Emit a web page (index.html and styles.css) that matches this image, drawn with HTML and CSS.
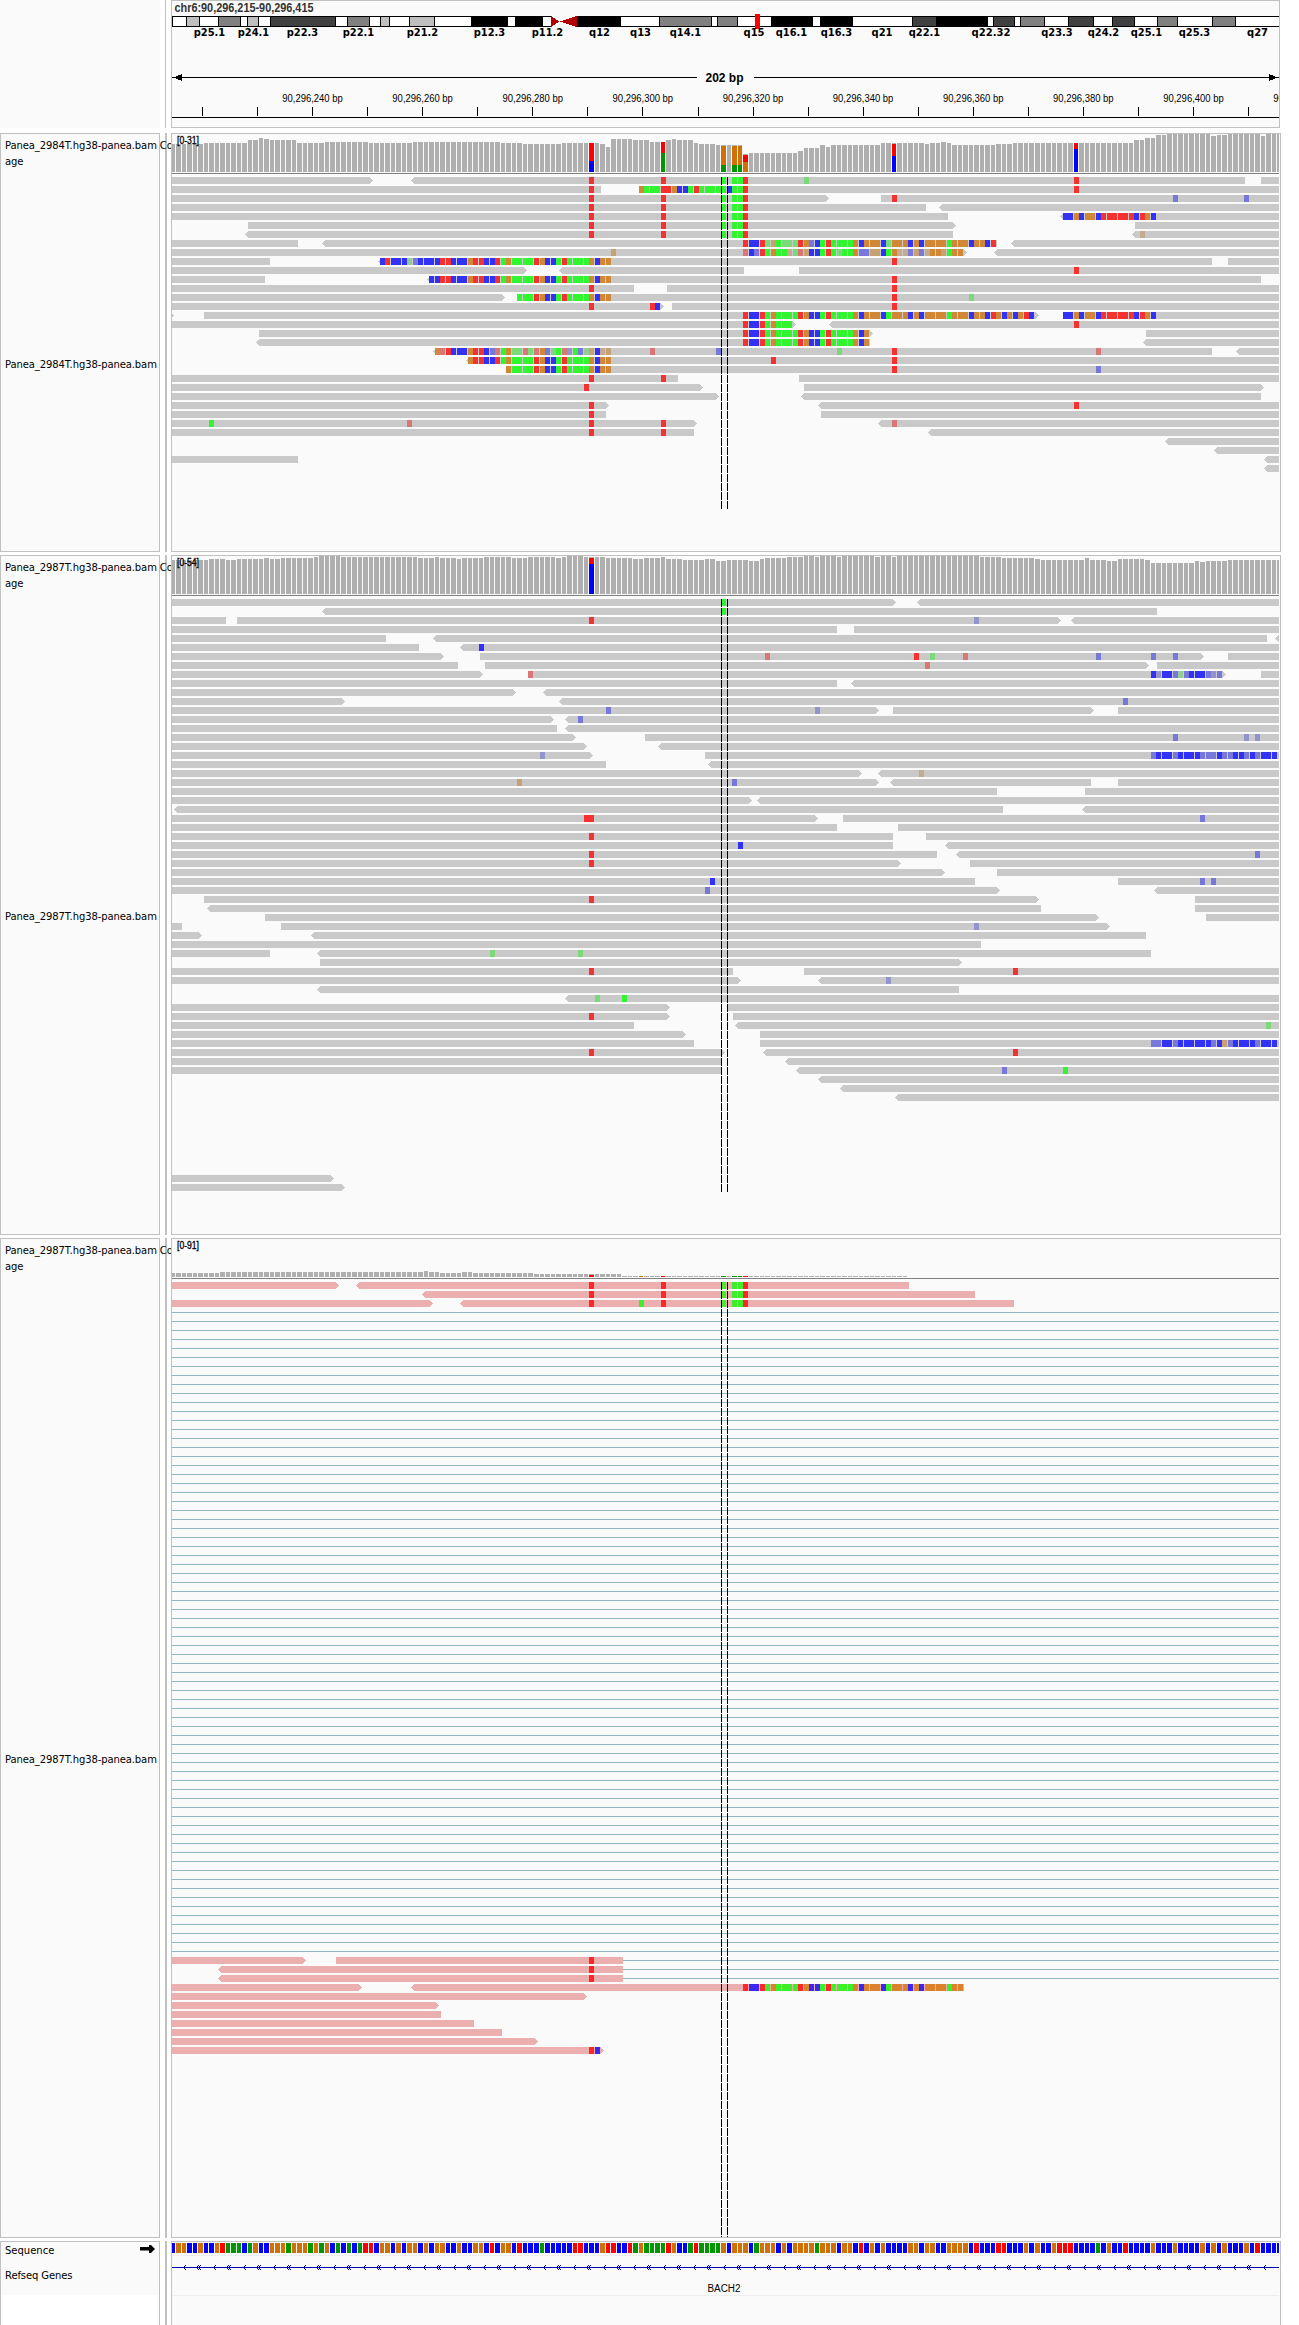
FILE: index.html
```html
<!DOCTYPE html>
<html lang="en">
<head>
<meta charset="utf-8">
<title>chr6:90,296,215-90,296,415</title>
<link rel="stylesheet" href="styles.css">
</head>
<body>
<main class="browser">
  <section class="row row-header">
    <div class="names names-blank"></div>
    <div class="divider divider-thin"></div>
    <div class="plot"><svg id="header" class="layer" width="1107" height="126" viewBox="172 1 1107 126"></svg></div>
  </section>

  <section class="row row-a">
    <div class="names">
      <div class="name-cov"><span>Panea_2984T.hg38-panea.bam Co</span><span>age</span></div>
      <div class="name-aln">Panea_2984T.hg38-panea.bam</div>
    </div>
    <div class="divider"></div>
    <div class="plot" id="a"></div>
  </section>

  <section class="row row-b">
    <div class="names">
      <div class="name-cov"><span>Panea_2987T.hg38-panea.bam Co</span><span>age</span></div>
      <div class="name-aln">Panea_2987T.hg38-panea.bam</div>
    </div>
    <div class="divider"></div>
    <div class="plot" id="b"></div>
  </section>

  <section class="row row-c">
    <div class="names">
      <div class="name-cov"><span>Panea_2987T.hg38-panea.bam Co</span><span>age</span></div>
      <div class="name-aln">Panea_2987T.hg38-panea.bam</div>
    </div>
    <div class="divider"></div>
    <div class="plot" id="c"></div>
  </section>

  <section class="row row-features">
    <div class="names names-open">
      <div class="feature-name">
        <span>Sequence</span>
        <svg class="strand" width="16" height="8" viewBox="0 0 16 8"><path d="M0 2H9V0H11L15 4L11 8H9V5.500H0Z"/></svg>
      </div>
      <div class="feature-name feature-genes">Refseq Genes</div>
    </div>
    <div class="divider"></div>
    <div class="plot plot-open"><svg id="features" class="layer" width="1108" height="83" viewBox="172 2242 1108 83"></svg></div>
  </section>
</main>
<script src="tracks.js"></script>
</body>
</html>
```
FILE: styles.css
```css
html, body { margin: 0; background: #fff; }
body { width: 1299px; height: 2325px; overflow: hidden; font-family: "DejaVu Sans", sans-serif; font-size: 10px; color: #000; }
.browser { display: flex; flex-direction: column; gap: 3px; }
.row { display: grid; grid-template-columns: 165px 6px 1110px; }
.row-header { height: 128px; margin-bottom: 2px; grid-template-columns: 165px 6px 1109px; }
.row-a { height: 419px; }
.row-b { height: 680px; }
.row-c { height: 1000px; }
.row-features { height: 84px; }

.names { box-sizing: border-box; width: 160px; border: 1px solid #c0c0c0; background: #fafafa; display: flex; flex-direction: column; letter-spacing: -0.1px; white-space: nowrap; position: relative; z-index: 1; }
.names-blank { border: 0; }
.names-open { border-bottom: 0; background: linear-gradient(#fafafa 53px, #fff 53px); }
.name-cov { height: 43px; padding-left: 4px; box-sizing: border-box; padding-top: 4px; }
.name-cov span { display: block; line-height: 16px; }
.name-aln { flex: 1; display: flex; align-items: center; padding-left: 4px; }
.feature-name { display: flex; align-items: center; justify-content: space-between; height: 16px; padding: 0 3px 0 4px; letter-spacing: 0; }
.feature-genes { height: 34px; letter-spacing: -0.1px; }
.strand { margin-bottom: 3px; }

.divider { width: 2px; background: #c0c0c0; }
.divider-thin { width: 1px; }
.plot { box-sizing: border-box; border: 1px solid #c0c0c0; background: #fafafa; overflow: hidden; position: relative; z-index: 2; }
.plot-open { border-bottom: 0; }
.layer { display: block; shape-rendering: crispEdges; }

.ruler-text { font-family: "Liberation Sans", sans-serif; font-size: 10px; }
.locus { font-family: "Liberation Sans", sans-serif; font-size: 12px; font-weight: bold; fill: #333; }
.span-text { font-family: "Liberation Sans", sans-serif; font-size: 12px; font-weight: bold; }
.band-text { font-family: "DejaVu Sans", sans-serif; font-size: 10px; font-weight: bold; }
.range { font-family: "Liberation Sans", sans-serif; font-size: 10px; stroke: #000; stroke-width: 0.3px; }
```
FILE: tracks.js
```js
const LEFT = 172, RIGHT = 1279;
const X = i => Math.floor(171.14 + 5.5055 * i);
const readX = i => Math.ceil(170.85 + 5.505 * i);

const rect = (x, y, w, h, fill) => {
  const x1 = Math.max(x, LEFT), x2 = Math.min(x + w, RIGHT);
  return x2 > x1 ? `<rect x="${x1}" y="${y}" width="${x2 - x1}" height="${h}" fill="${fill}"/>` : '';
};
const label = (cls, x, y, len, s, anchor = 'middle') =>
  `<text class="${cls}" x="${x}" y="${y}" text-anchor="${anchor}" textLength="${len}" lengthAdjust="spacingAndGlyphs">${s}</text>`;

const BASE = { A: '#009600', C: '#0000ff', G: '#d17105', T: '#ff0000' };
/* Lower case: low base quality; b, d and h are the faintest A, C and G. */
const GREY = {
  read: '#c9c9c9', A: '#32f532', C: '#3232f5', G: '#d08836', T: '#f53232',
  a: '#78da78', c: '#7878da', g: '#c8a172', t: '#d97777', b: '#93cd93', d: '#9393cd', h: '#c4ab90'
};
const PINK = { read: '#ebafaf', A: '#3cef28', C: '#3c28ef', G: '#dc822d', T: '#ff2828' };

/* Coverage: "count*height" runs, plus stacked allele columns (bottom first). */
function coverage(runs, alleles) {
  let out = '', i = 0;
  for (const run of runs.split(' ')) {
    const [n, h] = run.split('*').map(Number);
    for (let k = 0; k < n; k++, i++) {
      const w = X(i + 1) - X(i) - 1;
      out += rect(X(i), 38 - h, w, h, '#afafaf');
      let base = 38;
      for (const [, letter, size] of (alleles[i] || '').matchAll(/([ACGT])(\d+)/g)) {
        base -= +size;
        out += rect(X(i), base, w, +size, BASE[letter]);
      }
    }
  }
  return out + rect(LEFT, 39, 1107, 1, '#808080');
}

/* Reads: "<start-end>" segments, then "|" and mismatches such as 104TCCT. */
function reads(rows, colors) {
  let out = '';
  for (const [k, row] of Object.entries(rows)) {
    const y = k * 9, [segments, marks = ''] = row.split('|');
    for (const [, l, s, e, r] of segments.matchAll(/(<?)(\d+)-(\d+)(>?)/g)) {
      const x1 = readX(+s), x2 = +e >= 202 ? RIGHT : readX(+e);
      out += rect(x1, y, x2 - x1, 7, colors.read);
      if (l) out += `<path d="M${x1} ${y}L${x1 - 3} ${y + 3.5}L${x1} ${y + 7}Z" fill="${colors.read}"/>`;
      if (r) out += `<path d="M${x2} ${y}L${x2 + 3} ${y + 3.5}L${x2} ${y + 7}Z" fill="${colors.read}"/>`;
    }
    for (const [, at, seq] of marks.matchAll(/(\d+)([A-Za-z]+)/g))
      [...seq].forEach((b, n) => { out += rect(X(+at + n), y, 5, 7, colors[b]); });
  }
  return out;
}

const guides = end => [721, 727].map(x =>
  `<path d="M${x + .5} 0V${end}" stroke="#000" stroke-dasharray="8 1"/>`).join('');

function panel(id, height, range, cov, body) {
  document.getElementById(id).innerHTML =
    `<svg class="layer" width="1108" height="43" viewBox="172 0 1108 43">${cov}${label('range', 177, 9.5, 22, range, 'start')}</svg>` +
    `<svg class="layer" width="1108" height="${height}" viewBox="172 0 1108 ${height}">${body}</svg>`;
}

const rowsA = [
  '0-36> <44-195 198-202|76T 89T 100A 102AAT 115a 164T',
  '0-78 85-202|76T 85GAAATTGCCATAAAAACAAT 164T',
  '0-119> 129-202|76T 89T 100A 102AAT 131T 182c 195c',
  '0-137 <140-202|76T 89T 100A 102AAT',
  '0-141 <162-202|76T 89T 100A 102AAT 162CCGCGGCTTTTTTCTGC',
  '14-142> 175-202|76T 89T 100A 102AAT',
  '<14-142 <175-202|76T 89T 100A 102AAT 176h',
  '0-23 <28-150 <153-202|104TCCTagAaaaTGcCATAAAAGCGGGCaGGGCGCGGGGAGGGCGGCT',
  '0-144> <150-202|80g 104tCcTAGAAhatgCCATAaAAGccggCAGhhcgchGGgAGG',
  '0-18 <38-189 192-202|38CTCCCbcCCCCTTCCCGTTCCTAGAAAATGCCATAAAAGCGG 131T',
  '0-64> <71-104 114-202|164T',
  '0-17 <47-198|47CCTTCCCGTTCCTAGAAAATGCCATAAAAGCGG 131T',
  '0-84 90-202|76T 131T',
  '0-60> 63-202|63AAATGCCATAAAAGCGG 131T 145a',
  '0-89> 91-202|76T 87TC 131T',
  '0-0> 6-157> 162-202|104TCCTAGAAAATGCCATAAAAGCGGGCAGGGCGCGGGGAGGGCGGCTGCGCGTC 162CCGCGGCTTTTTTCTGC',
  '0-113> <120-202|104TCCTAGAAA 164T',
  '16-127> 177-202|104TCCTAGAAAATGCCATAAAAGCG',
  '<16-127 <177-202|104TCCTAGAAAATGCCATAAAAGCG',
  '<48-189 <194-202|48GtTCCCGTTCctAGaatatGcaAtdAcbgChg 87t 99c 121a 131T 168t',
  '<54-202|54GTTCCTAGAAAATGCCATAAAAGCGG 109T 131T',
  '61-202|61GAAAATGCCATAAAAGCGG 131T 168c',
  '0-92 114-202|76T 89T',
  '0-96> 115-198>|75T',
  '0-99> <115-198',
  '0-79> <118-202|76T 164T',
  '0-79 118-202|76T',
  '0-95> <129-202|7A 43t 76T 89T 131t',
  '0-95 <138-202|76T 89T',
  '<181-202',
  '<190-202',
  '0-23 <199-202',
  '<199-202'
];

const rowsB = [
  '0-131> <136-202|100A',
  '<28-179|100A',
  '0-10 12-161> <164-202|76T 146d',
  '0-121 124-202',
  '0-39 <48-199 <201-202',
  '0-45 <53-202|56C',
  '0-49> 56-187> 192-202|108t 135T 138a 144t 168c 178c 182c',
  '0-52 57-177> 179-202|137t',
  '0-56> 65-191> 198-202|65t 178CdCCcbcCCCcdc',
  '0-121 <124-202',
  '0-62> <68-202',
  '0-31> <71-202|173c',
  '0-128> 131-167> 172-202|79c 117d',
  '0-69> <72-202|74c',
  '0-70 <72-202',
  '0-73> 86-202|182c 195d 197d',
  '0-75> <89-202',
  '0-76> 97-202|67d 178cCCCcCCCCcccCccCCcCcCCC',
  '0-79 <98-202',
  '0-125> <129-202|136h',
  '0-128> <131-167 172-202|63g 102c',
  '0-150 166-202',
  '0-105> <107-202',
  '<1-151 <166-202',
  '0-117> 122-202|75TT 187c',
  '0-121 132-202',
  '0-131 137-202|76T',
  '0-131 <141-202|103C',
  '0-139 <143-202|76T 197c',
  '0-132> 145-202|76T',
  '0-140> 150-202',
  '0-146 172-202|98C 187c 189c',
  '0-150> <179-202|97c',
  '6-157> 186-202|76T',
  '<7-158 186-202',
  '17-168> 188-202',
  '0-2 20-170>|146d',
  '0-5> <26-177',
  '0-147',
  '0-18 <27-178|58a 74a',
  '27-143>',
  '0-102 115-202|76T 153T',
  '0-103> <118-202|130d',
  '<27-143',
  '<72-202|77a 82A',
  '0-90> 101-202',
  '0-90> 102-202|76T',
  '0-84 <103-202|199a',
  '0-93> 107-202',
  '0-95 107-202|178ccCCcCCCCCCcCgcCCCCcCCC',
  '0-100> <108-202|76T 153T',
  '0-100 <112-202',
  '0-100 <114-202|151c 162A',
  '<118-202',
  '<122-202',
  '<132-202'
];
const rowsBAll = { ...rowsB, 64: '0-29>', 65: '0-31>' };

const rowsC = {
  0: '0-30> <34-134|76T 89T 100A 102AAT',
  1: '<46-146|76T 89T 100A 102AAT',
  2: '0-47> <53-153|76T 85A 89T 100A 102AAT',
  75: '0-24> 30-82|76T',
  76: '<9-82|76T',
  77: '<9-82|76T',
  78: '0-34> <44-144|104TCCTAGAAAATGCCATAAAAGCGGGCAGGGCGCGGGGAGG',
  79: '0-75>',
  80: '0-48>',
  81: '0-49',
  82: '0-55',
  83: '0-60',
  84: '0-66>',
  85: '0-78>|76TC'
};

panel('a', 374, '[0-31]',
  coverage('6*28 8*29 2*32 1*34 1*33 5*32 5*29 8*30 8*29 16*30 4*29 7*28 7*29 1*28 1*25 4*33 3*32 3*30 1*32 1*33 3*32 1*29 3*28 1*27 4*27 1*18 9*19 1*21 3*24 1*27 1*25 9*27 8*29 1*28 2*29 1*30 1*29 8*27 3*28 22*29 2*32 2*34 2*37 8*38 1*36 2*37 6*38 1*36 3*38',
    { 76: 'C11T18', 89: 'A19T11', 100: 'A7G19', 102: 'A7G19', 103: 'A7G19', 104: 'G10T7', 131: 'C16T12', 164: 'C23T6' }),
  reads(rowsA, GREY) + guides(332));

panel('b', 635, '[0-54]',
  coverage('7*34 3*35 2*34 5*35 1*36 2*35 6*36 1*37 4*38 14*37 3*36 1*37 3*36 1*35 4*36 5*37 3*36 5*37 1*36 1*37 3*38 4*37 5*36 2*35 3*36 1*37 3*35 4*34 2*35 2*33 4*34 2*33 1*35 4*36 3*37 2*38 1*37 3*38 1*37 6*38 1*37 2*38 1*37 15*38 4*37 6*36 1*35 8*34 1*36 3*34 2*33 5*35 1*34 8*31 1*33 1*32 4*33 10*34',
    { 76: 'C30T6' }),
  reads(rowsBAll, GREY) + guides(593));

let links = '';
for (let k = 3; k <= 77; k++) {
  const x = k > 74 ? X(82) : LEFT;
  links += rect(x, k * 9 + 3, RIGHT - x, 1, '#94b6c4');
}
panel('c', 955, '[0-91]',
  coverage('9*4 37*5 1*6 2*5 4*4 2*5 11*4 16*3 52*1',
    { 76: 'T2', 85: 'G1', 89: 'T1', 100: 'A1', 102: 'A1', 103: 'A1', 104: 'T1' }),
  links + reads(rowsC, PINK) + guides(955));

/* Header: ideogram, span and ruler. */
const bands = [
  [187, 199, '#bfbfbf'], [219, 240, '#808080'], [248, 258, '#bfbfbf'], [271, 335, '#404040'],
  [348, 369, '#808080'], [381, 389, '#bfbfbf'], [410, 434, '#bfbfbf'], [472, 507, '#000'],
  [516, 542, '#000'], [578, 620, '#000'], [660, 711, '#808080'], [718, 737, '#808080'],
  [772, 812, '#000'], [821, 852, '#000'], [913, 936, '#404040'], [937, 987, '#000'],
  [994, 1014, '#404040'], [1021, 1044, '#808080'], [1069, 1093, '#404040'],
  [1113, 1134, '#404040'], [1158, 1177, '#808080'], [1213, 1235, '#808080']
];
const bandNames = [
  ['p25.1', 209.5], ['p24.1', 253.5], ['p22.3', 302.5], ['p22.1', 358.5], ['p21.2', 422.5],
  ['p12.3', 489.5], ['p11.2', 547.5], ['q12', 599.5], ['q13', 640.5], ['q14.1', 685.5], ['q15', 754],
  ['q16.1', 791.5], ['q16.3', 836.5], ['q21', 882], ['q22.1', 924.5], ['q22.32', 991],
  ['q23.3', 1057], ['q24.2', 1103.5], ['q25.1', 1146.5], ['q25.3', 1194.5], ['q27', 1257.5]
];
let head = label('locus', 174.5, 12, 139, 'chr6:90,296,215-90,296,415', 'start');
head += rect(172, 16, 1107, 11, '#000') + rect(173, 17, 1106, 9, '#fff');
for (const [a, b, c] of bands) head += rect(a - 1, 16, b - a + 2, 11, '#000') + rect(a, 17, b - a, 9, c);
head += rect(551, 16, 26, 11, '#fafafa') + '<path d="M551 16L559 21.500L551 27ZM577 16L560 21.500L577 27Z" fill="#b20000"/>';
head += rect(755, 14, 5, 15, '#ff0000');
for (const [s, x] of bandNames) head += label('band-text', x, 36, s.length === 3 ? 21 : s.length === 5 ? 31.5 : 39, s);
head += rect(172, 77, 525, 1, '#000') + rect(754, 77, 525, 1, '#000');
head += '<path d="M173 77.500L182 74V81ZM1278 77.500L1269 74V81Z"/>';
head += label('span-text', 724.5, 82, 38, '202 bp');
head += rect(172, 117, 1107, 1, '#000');
for (let k = 0; k < 20; k++) head += rect(Math.floor(202.4 + k * 55.07), 107, 1, 9, '#000');
for (let k = 0; k < 10; k++) head += label('ruler-text', 312.5 + k * 110.12, 102, 60.5, `90,296,${240 + 20 * k} bp`);
document.getElementById('header').innerHTML = head;

/* Sequence strip and gene model. */
const sequence = 'CGGCCGCCGTAAACAGCCGGGAGGGAGAGCACACATTCGGCGCGGCGCGGCCGCCGGCTCGGCTCCCACCCCCTTCCCGTTCCTAGA' +
  'AAATGCCATAAAAGCGGGCAGGGCGCGGGGAGGGCGGCTCGCGCCCCGGCGGCCGGGGCTCCCTTCCCGCGCCGTTTCCCCACGCCTCCCCGCCCGCCCCGCGCGCCCGCTCCCC';
let feat = '';
[...sequence].forEach((b, i) => { feat += rect(X(i), 2243, X(i + 1) - X(i) - 1, 10, BASE[b]); });
feat += rect(172, 2255, 1107, 1, '#eeeeee') + rect(172, 2295, 1107, 1, '#eeeeee');
feat += rect(172, 2267, 1107, 1, '#0000b2');
const tip = x => [[1, 2265], [0, 2266], [0, 2268], [1, 2269]].map(([d, y]) => rect(x + d, y, 1, 1, '#0000b2')).join('');
for (let x = 184; x < 1276; x += 30) {
  feat += tip(x);
  if (x + 14 < 1276) feat += tip(x + 13) + tip(x + 15);
}
feat += label('ruler-text', 724, 2292, 33, 'BACH2');
document.getElementById('features').innerHTML = feat;
```
